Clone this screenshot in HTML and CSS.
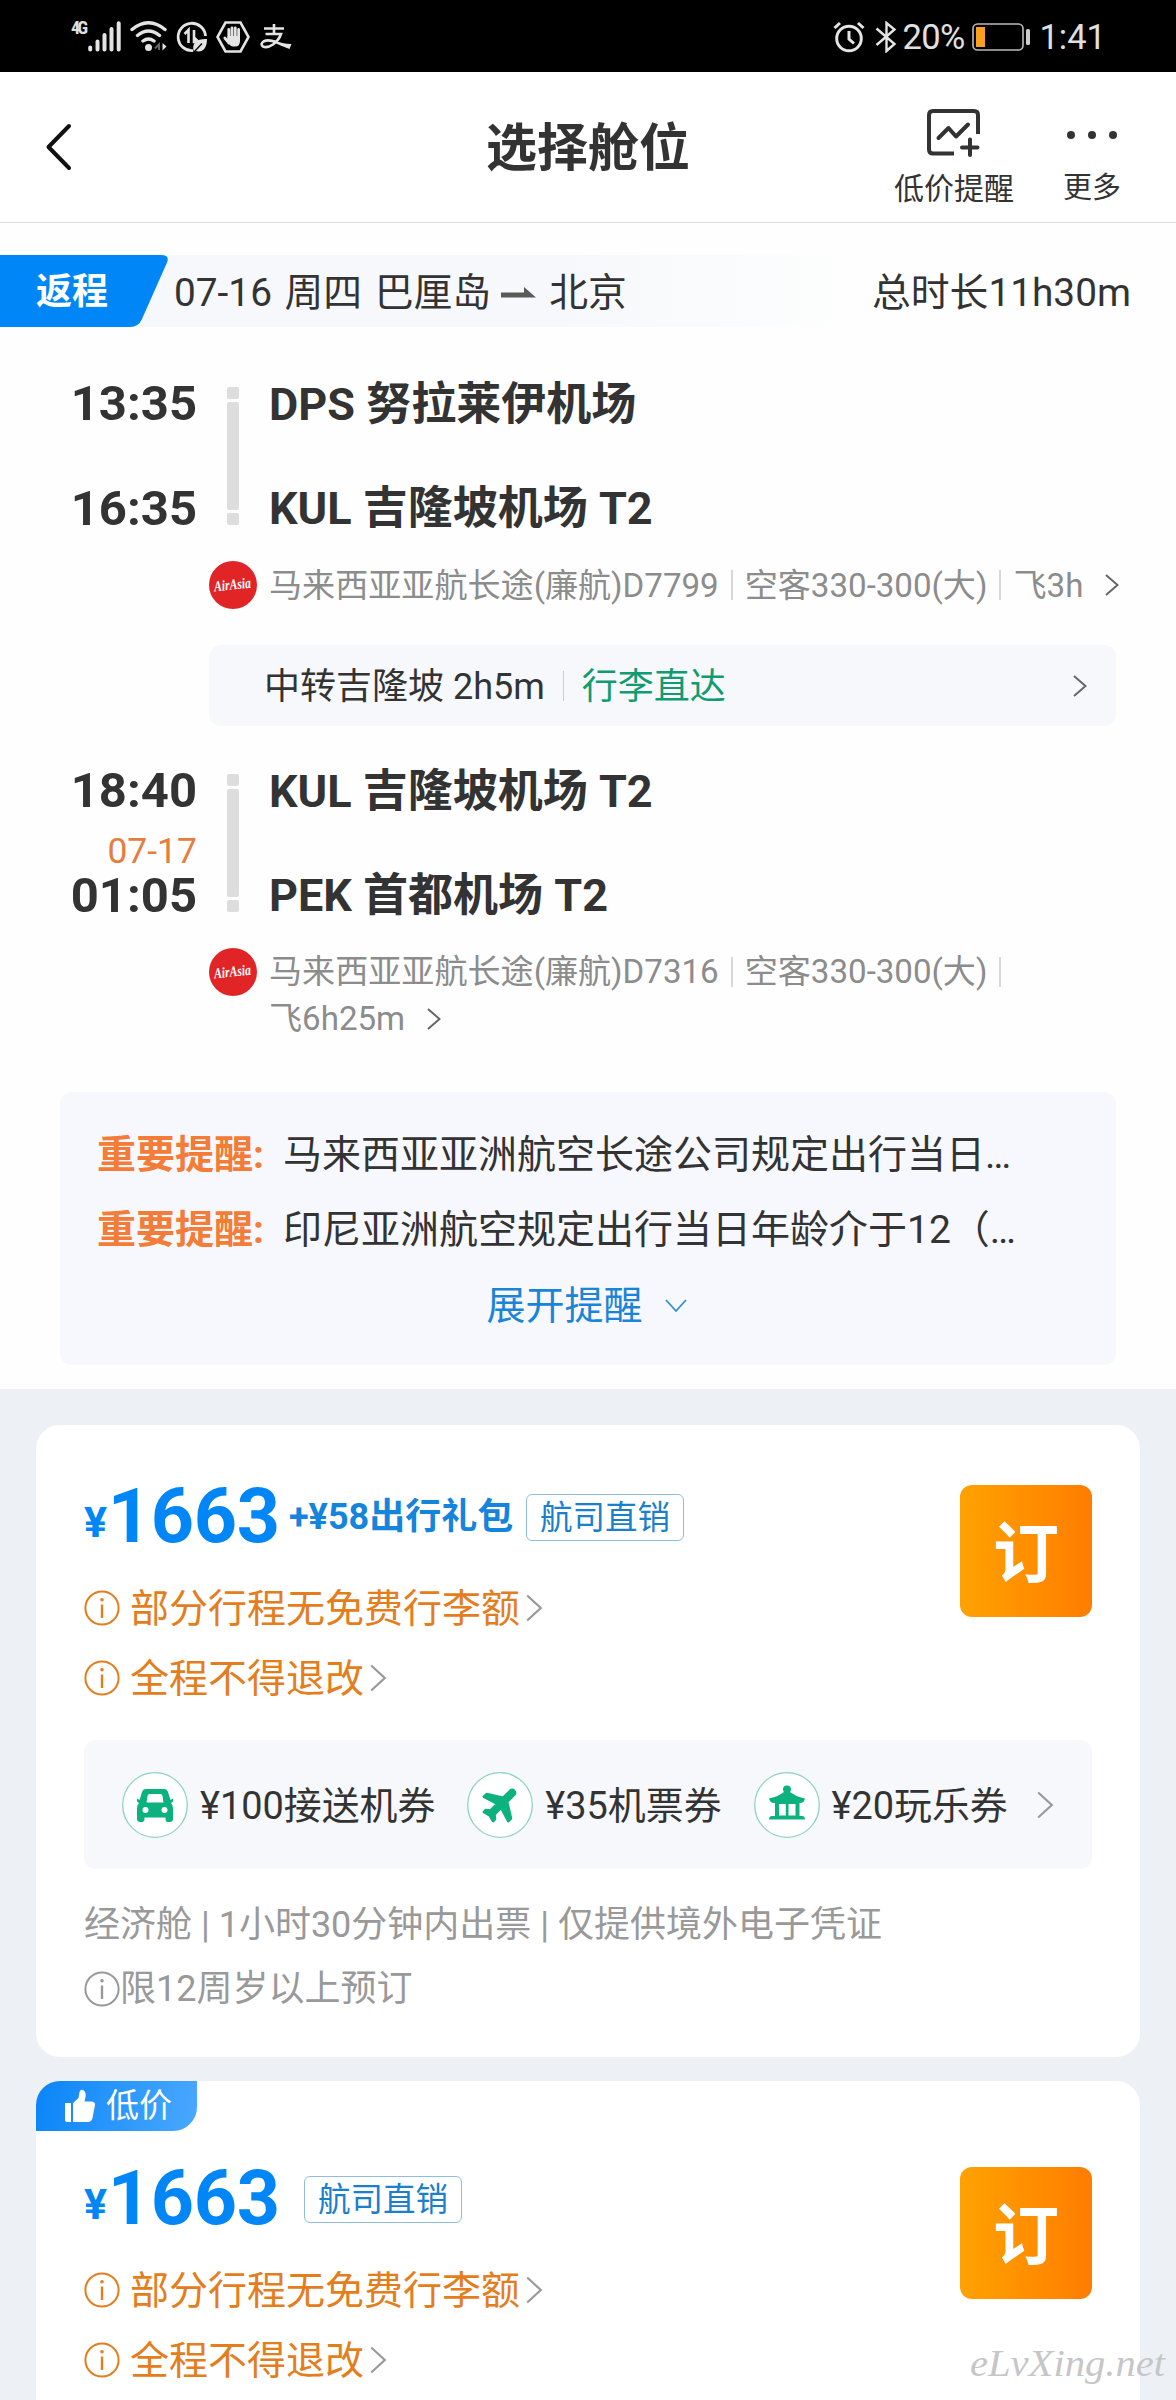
FILE: index.html
```html
<!DOCTYPE html>
<html lang="zh-CN">
<head>
<meta charset="utf-8">
<title>选择舱位</title>
<link rel="stylesheet" href="styles.css">
</head>
<body>
<svg class="defs" width="0" height="0" aria-hidden="true">
  <symbol id="chev" viewBox="0 0 14 22"><path d="M1 1L12.5 11L1 21" fill="none" stroke="currentColor" stroke-width="2"/></symbol>
  <symbol id="chev-lg" viewBox="0 0 17 28"><path d="M1.2 1.5L14.8 14L1.2 26.500" fill="none" stroke="currentColor" stroke-width="2.2"/></symbol>
  <symbol id="info" viewBox="0 0 36 36"><circle cx="18" cy="18" r="16.600" fill="none" stroke="currentColor" stroke-width="2"/><circle cx="18" cy="9.800" r="1.800" fill="currentColor"/><path d="M18 14.500V28" stroke="currentColor" stroke-width="2.400"/></symbol>
</svg>

<div class="status">
  <div class="status-left">
    <span class="net">4G</span>
    <svg class="signal" width="33" height="31" viewBox="0 0 33 31"><g stroke="#e4e4e4" stroke-width="4" stroke-linecap="round"><path d="M2.200 26.500V28.500M9.500 20.500V28.500M16.500 14V28.500M23.500 8V28.500M30.700 2.200V28.500"/></g></svg>
    <svg class="wifi" width="38" height="31" viewBox="0 0 38 31"><g fill="none" stroke="#e4e4e4" stroke-width="3.400" stroke-linecap="round"><path d="M2 8.500Q18.500 -5 35 8.500M7.500 14.500Q18.500 5.500 29.500 14.500M13 20Q18.500 16 24 20"/></g><circle cx="18.500" cy="26.500" r="3.500" fill="#e4e4e4"/><path d="M29 29V23.500L25 27.500" stroke="#666" fill="none" stroke-width="2"/><path d="M32.500 22V29.500L36.500 25.500Z" fill="#e4e4e4"/></svg>
    <svg class="data" width="32" height="32" viewBox="0 0 32 32"><path d="M29.500 15A13.700 13.700 0 1 0 17 29.600" fill="none" stroke="#e4e4e4" stroke-width="2.800"/><path d="M8.500 13L12.500 9V22M18 9V21H22.500L18.500 17" fill="none" stroke="#e4e4e4" stroke-width="2.600"/><path d="M18 31C15 22 21 17.500 31 18C31 27 27 32 20 30Z" fill="#e4e4e4"/><path d="M18 31L26 22.500" stroke="#000" stroke-width="1.300"/></svg>
    <svg class="hex" width="34" height="32" viewBox="0 0 34 32"><path d="M9.500 1.500H24.500L32.500 16L24.500 30.500H9.500L1.500 16Z" fill="none" stroke="#e4e4e4" stroke-width="2.600"/><g stroke="#e4e4e4" stroke-width="2.800" stroke-linecap="round"><path d="M12.800 8.500V18M16 6.800V18M19.300 6.800V18M22.600 8.500V18M8.800 17L13 22"/></g><path d="M11.500 15H24V20Q24 25.500 19 25.500H17.500Q13.500 25.500 11.500 20Z" fill="#e4e4e4"/></svg>
    <svg class="pay" width="32" height="26" viewBox="0 0 32 26"><g fill="none" stroke="#e4e4e4" stroke-width="2.600"><path d="M4 4.500H24M14 0V10M5.500 10H21Q19 16 13 20.500Q7 24.500 3 22.500Q0 20 3.500 17.500Q8 15 16 18"/></g><path d="M14 16Q22 20 31.500 20L29.500 25Q21 22 14 18.500Z" fill="#e4e4e4"/></svg>
  </div>
  <div class="status-right">
    <svg class="alarm" width="32" height="32" viewBox="0 0 32 32"><g fill="none" stroke="#e4e4e4" stroke-width="3"><circle cx="16" cy="17.500" r="12.300"/><path d="M1.500 7L7 2M30.500 7L25 2M16 10V18L21 22.500"/></g></svg>
    <svg class="bt" width="22" height="32" viewBox="0 0 22 32"><path d="M1.500 7.500L19.500 23L11.500 30V2L19.500 8.500L1.500 24" fill="none" stroke="#e4e4e4" stroke-width="2.400"/></svg>
    <span class="pct">20%</span>
    <svg class="batt" width="59" height="28" viewBox="0 0 59 28"><rect x="1" y="1" width="50" height="26" rx="4.500" fill="none" stroke="#bbb" stroke-width="1.600"/><rect x="4" y="4" width="9" height="20" fill="#f9a01f"/><rect x="54" y="6" width="4" height="16" rx="1.500" fill="#ccc"/></svg>
    <span class="clock">1:41</span>
  </div>
</div>

<header class="header">
  <svg class="back" width="28" height="48" viewBox="0 0 28 48"><path d="M25 3L4.500 24L25 45" fill="none" stroke="#111" stroke-width="4" stroke-linecap="round" stroke-linejoin="round"/></svg>
  <h1>选择舱位</h1>
  <div class="action alert">
    <svg width="54" height="48" viewBox="0 0 54 48"><g fill="none" stroke="#333" stroke-width="4"><path d="M27 44.500H6Q2 44.500 2 40.500V6Q2 2 6 2H47Q51 2 51 6V25" /><path d="M11.500 29L21.500 19L29 27.500L41 15.500" stroke-linecap="round" stroke-linejoin="round"/><path d="M43 30.500V46M35 38.500H50.500" stroke-linecap="round"/></g></svg>
    <span>低价提醒</span>
  </div>
  <div class="action more">
    <svg width="52" height="10" viewBox="0 0 52 10"><g fill="#333"><circle cx="5" cy="5" r="4"/><circle cx="26" cy="5" r="4"/><circle cx="47" cy="5" r="4"/></g></svg>
    <span>更多</span>
  </div>
</header>

<main>
  <section class="trip">
    <div class="trip-bar">
      <div class="dir">
        <svg class="dir-bg" width="168" height="72" viewBox="0 0 168 72"><path d="M0 0H161Q170 0 167 7.500L142 64Q138.500 72 130 72H0Z" fill="#0086f6"/></svg>
        <span>返程</span>
      </div>
      <span class="date">07-16 周四 巴厘岛</span>
      <svg class="arrow" width="35" height="12" viewBox="0 0 35 12"><path d="M0 5.500H23V0L35 10.500H0Z" fill="#5a5a5a"/></svg>
      <span>北京</span>
      <span class="total">总时长11h30m</span>
    </div>

    <div class="route">
      <div class="times"><b>13:35</b><b>16:35</b></div>
      <div class="rail"><i></i><i class="long"></i><i></i></div>
      <div class="ports"><b>DPS 努拉莱伊机场</b><b>KUL 吉隆坡机场 T2</b></div>
    </div>
    <div class="flight">
      <svg class="logo" width="48" height="48" viewBox="0 0 48 48"><circle cx="24" cy="24" r="24" fill="#e12426"/><text x="5" y="28.500" textLength="37" lengthAdjust="spacingAndGlyphs" transform="rotate(-6 24 24)">AirAsia</text></svg>
      <div class="meta"><span>马来西亚亚航长途(廉航)D7799</span><i></i><span>空客330-300(大)</span><i></i><span>飞3h<svg class="chev" width="14" height="22"><use href="#chev"/></svg></span></div>
    </div>

    <div class="transfer"><span>中转吉隆坡 2h5m</span><i></i><span class="green">行李直达</span><svg class="chev" width="14" height="22"><use href="#chev"/></svg></div>

    <div class="route">
      <div class="times"><b>18:40</b><span>07-17</span><b>01:05</b></div>
      <div class="rail"><i></i><i class="long"></i><i></i></div>
      <div class="ports"><b>KUL 吉隆坡机场 T2</b><b>PEK 首都机场 T2</b></div>
    </div>
    <div class="flight">
      <svg class="logo" width="48" height="48" viewBox="0 0 48 48"><circle cx="24" cy="24" r="24" fill="#e12426"/><text x="5" y="28.500" textLength="37" lengthAdjust="spacingAndGlyphs" transform="rotate(-6 24 24)">AirAsia</text></svg>
      <div class="meta"><span>马来西亚亚航长途(廉航)D7316</span><i></i><span>空客330-300(大)</span><i></i><span>飞6h25m<svg class="chev" width="14" height="22"><use href="#chev"/></svg></span></div>
    </div>

    <div class="notice">
      <p><b>重要提醒:</b><span>马来西亚亚洲航空长途公司规定出行当日…</span></p>
      <p><b>重要提醒:</b><span>印尼亚洲航空规定出行当日年龄介于12（…</span></p>
      <p class="expand">展开提醒<svg width="22" height="14" viewBox="0 0 22 14"><path d="M1 1L11 12L21 1" fill="none" stroke="#2b8fdc" stroke-width="1.800"/></svg></p>
    </div>
  </section>

  <section class="offers">
    <article class="card">
      <div class="head">
        <div class="info">
          <div class="price-row"><div class="price"><small>¥</small>1663</div><b class="plus">+¥58出行礼包</b><span class="tag">航司直销</span></div>
          <div class="warn"><svg width="36" height="36"><use href="#info"/></svg><span>部分行程无免费行李额</span><svg class="chev-lg" width="17" height="28"><use href="#chev-lg"/></svg></div>
          <div class="warn"><svg width="36" height="36"><use href="#info"/></svg><span>全程不得退改</span><svg class="chev-lg" width="17" height="28"><use href="#chev-lg"/></svg></div>
        </div>
        <button class="book">订</button>
      </div>
      <div class="perks">
        <svg width="66" height="66" viewBox="0 0 66 66"><circle cx="33" cy="33" r="32.300" fill="#fff" stroke="#8fd4bd" stroke-width="1.300"/><path d="M24 17H42Q45 17 46 20L48.500 28L51 26.500V29.500L49 31Q51 33 51 36V47Q51 50 48 50H46Q43.500 50 43.500 47V45.500H22.500V47Q22.500 50 20 50H18Q15 50 15 47V36Q15 33 17 31L15 29.500V26.500L17.500 28L20 20Q21 17 24 17ZM27.500 22Q26 22 25.500 24L24.500 30.500H41.500L40.500 24Q40 22 38.500 22ZM23.500 35A3 3 0 1 0 23.500 41A3 3 0 1 0 23.500 35ZM42.500 35A3 3 0 1 0 42.500 41A3 3 0 1 0 42.500 35Z" fill="#0cb27e" fill-rule="evenodd"/></svg>
        <span>¥100接送机券</span>
        <svg class="next" width="66" height="66" viewBox="0 0 66 66"><circle cx="33" cy="33" r="32.300" fill="#fff" stroke="#8fd4bd" stroke-width="1.300"/><g transform="translate(33 33) rotate(45) scale(1.800) translate(-11.500 -13)"><path d="M21 16v-2l-8-5V3.500c0-.83-.67-1.500-1.500-1.500S10 2.670 10 3.500V9l-8 5v2l8-2.500V19l-2 1.500V22l3.500-1 3.500 1v-1.500L13 19v-5.500l8 2.500z" fill="#0cb27e" stroke="#0cb27e" stroke-width="1.600" stroke-linejoin="round"/></g></svg>
        <span>¥35机票券</span>
        <svg class="next" width="66" height="66" viewBox="0 0 66 66"><circle cx="33" cy="33" r="32.300" fill="#fff" stroke="#8fd4bd" stroke-width="1.300"/><path d="M33 13.500A4 4 0 0 1 37 17.500Q37 19 36 20Q43 25 51 26.500Q50 31 46 31H45.500V44H48Q51 44 51 47.500H15Q15 44 18 44H21V31H20Q16 31 15 26.500Q23 25 30 20Q29 19 29 17.500A4 4 0 0 1 33 13.500ZM25 32V43.500H31.800V32ZM34.500 32V43.500H41.500V32Z" fill="#0cb27e" fill-rule="evenodd"/></svg>
        <span>¥20玩乐券</span>
        <svg class="chev-lg" width="17" height="30"><use href="#chev-lg"/></svg>
      </div>
      <p class="terms">经济舱 | 1小时30分钟内出票 | 仅提供境外电子凭证</p>
      <p class="terms"><svg width="36" height="36"><use href="#info"/></svg>限12周岁以上预订</p>
    </article>

    <article class="card second">
      <div class="badge"><svg width="32" height="34" viewBox="0 0 32 34"><path d="M1 14H7V33H3Q1 33 1 31ZM9 14L14.500 9L15.500 3Q16.500 0 19 1Q22.500 3 21.500 8L20.500 12.500H28Q31.500 13 31 16L28.500 29Q27.500 33 24 33H9Z" fill="#fff"/></svg><span>低价</span></div>
      <div class="head">
        <div class="info">
          <div class="price-row"><div class="price"><small>¥</small>1663</div><span class="tag solo">航司直销</span></div>
          <div class="warn"><svg width="36" height="36"><use href="#info"/></svg><span>部分行程无免费行李额</span><svg class="chev-lg" width="17" height="28"><use href="#chev-lg"/></svg></div>
          <div class="warn"><svg width="36" height="36"><use href="#info"/></svg><span>全程不得退改</span><svg class="chev-lg" width="17" height="28"><use href="#chev-lg"/></svg></div>
        </div>
        <button class="book">订</button>
      </div>
    </article>
  </section>
</main>
<svg class="mark" width="206" height="56" viewBox="0 0 206 56"><text x="2" y="38" textLength="195" lengthAdjust="spacingAndGlyphs">eLvXing.net</text></svg>
</body>
</html>
```
FILE: styles.css
```css
* { box-sizing: border-box; margin: 0; padding: 0; }
body {
  position: relative;
  width: 1176px;
  height: 2400px;
  overflow: hidden;
  background: #fefefe;
  color: #333;
  font-family: Roboto, "Noto Sans CJK SC", sans-serif;
  white-space: nowrap;
}
svg { display: block; flex: none; }
.defs { position: absolute; }

.status { display: flex; justify-content: space-between; height: 72px; padding: 21px 72px 0 71px; background: #000; color: #e0e0e0; }
.status-left, .status-right { display: flex; align-items: flex-start; }
.net { width: 17px; font: bold 18px/14px "Roboto Condensed", Roboto, sans-serif; letter-spacing: -2.500px; }
.wifi { margin-left: 9px; }
.data { margin-left: 8px; }
.hex { margin-left: 8px; }
.pay { margin: 3px 0 0 10px; }
.bt { margin-left: 10px; }
.pct, .clock { font-size: 34.500px; line-height: 32px; }
.pct { width: 67px; margin-left: 5px; letter-spacing: -.6px; }
.batt { margin: 2px 8px 0 3px; }
.clock { margin-right: -2px; }

.header { display: flex; height: 151px; padding-left: 44px; border-bottom: 1px solid #dcdcdc; background: #fff; }
.back { margin-top: 51px; }
.header h1 { margin-left: 414px; font-size: 51px; line-height: 153px; }
.action { display: flex; flex-direction: column; align-items: center; }
.alert { margin: 37px 0 0 204px; font-size: 30px; line-height: 36px; }
.alert span { margin-top: 14px; }
.more { margin: 58px 0 0 49px; font-size: 29px; line-height: 36px; }
.more span { margin-top: 30px; }

.trip { padding: 32px 0 24px; background: #fefefe; }
.trip-bar {
  display: flex;
  height: 72px;
  padding-right: 45px;
  background: linear-gradient(90deg, #f6f8fb 0, #f6f8fb 560px, #fefefe 870px);
  font-size: 38.800px;
  line-height: 75px;
}
.dir { position: relative; width: 168px; color: #fff; font-size: 36px; font-weight: bold; }
.dir-bg { position: absolute; left: 0; top: 0; }
.dir span { position: relative; margin-left: 36px; }
.date { margin-left: 6px; word-spacing: 3px; }
.arrow { margin: 32px 13px 0 10px; }
.total { margin-left: auto; }

.route { display: flex; height: 138px; margin-top: 60px; }
.times { display: flex; flex-direction: column; justify-content: space-between; align-items: flex-end; width: 197px; padding-top: 1px; font-size: 49px; line-height: 32px; }
.times span { padding-top: 14px; color: #e67d3c; font-size: 35.500px; line-height: 30px; }
.rail { display: flex; flex-direction: column; gap: 3px; width: 12px; margin: 0 30px; }
.rail i { height: 12px; border-radius: 2px; background: #ddd; }
.rail .long { flex: 1; }
.ports { display: flex; flex-direction: column; justify-content: space-between; padding-top: 1px; font-size: 45px; line-height: 33px; }

.flight { display: flex; margin: 36px 0 0 209px; }
.logo text { fill: #fff; font: italic bold 15px "Liberation Serif", serif; }
.meta { display: flex; flex-wrap: wrap; width: 870px; margin-left: 12px; color: #8c8c8c; font-size: 33.100px; line-height: 47px; }
.meta span { display: flex; align-items: center; }
.meta i { width: 2px; height: 30px; margin: 9px 12px 0 12px; background: #d8d8d8; }
.chev { color: #666; }
.meta .chev { margin-left: 22px; }

.transfer { display: flex; align-items: center; height: 81px; margin: 36px 60px 0 209px; padding: 0 29px 0 55px; border-radius: 12px; background: #f6f8fb; font-size: 36px; line-height: 79px; }
.transfer span { padding-top: 4px; }
.transfer i { width: 1px; height: 30px; margin: 0 18px; background: #ccc; }
.transfer .green { color: #109c70; }
.transfer .chev { margin-left: auto; }
.transfer + .route { margin-top: 48px; }

.notice { height: 273px; margin: 50px 60px 0; padding: 25px 37px 0; border-radius: 12px; background: #f7f8fd; font-size: 39px; line-height: 77px; }
.notice p { display: flex; height: 75px; }
.notice b { width: 186px; color: #f27c38; }
.notice .expand { justify-content: center; align-items: center; gap: 22px; padding: 3px 3px 0 0; color: #1a84d6; }

.offers { display: flex; flex-direction: column; gap: 24px; height: 1011px; padding: 36px 36px 0; overflow: hidden; background: #edf1f6; }
.card { flex: none; height: 632px; padding: 60px 48px 0; border-radius: 24px; background: #fff; }
.head { display: flex; justify-content: space-between; }
.price-row { display: flex; height: 64px; margin-bottom: 24px; line-height: 64px; }
.price { width: 205px; color: #0086f6; font-size: 75.500px; font-weight: bold; letter-spacing: -.3px; line-height: 62px; }
.price small { margin-right: 1px; font-size: 43px; line-height: 1; vertical-align: 5px; }
.plus { width: 237px; color: #1484dc; font-size: 36px; }
.tag { height: 47px; margin-top: 9px; padding: 0 13px; border: 1.500px solid #8fbce0; border-radius: 6px; color: #1a80cc; font-size: 32.500px; line-height: 47px; }
.tag.solo { margin-left: 15px; }
.warn { display: flex; align-items: center; height: 70px; color: #e47d1c; font-size: 39px; line-height: 68px; }
.warn span { margin: 0 6px 0 10px; padding-top: 2px; }
.chev-lg { color: #999; }
.book { width: 132px; height: 132px; padding-bottom: 5px; border: 0; border-radius: 12px; background: linear-gradient(90deg, #ffa200, #ff7d00); color: #fff; font: bold 66px/1.500 "Noto Sans CJK SC", sans-serif; }
.perks { display: flex; align-items: center; height: 129px; margin-top: 27px; padding: 0 38px; border-radius: 12px; background: #f6f8fc; font-size: 37.900px; line-height: 125px; }
.perks span { margin-left: 12px; padding-top: 4px; }
.perks .next { margin-left: 32px; }
.perks .chev-lg { margin-left: auto; }
.terms { display: flex; align-items: center; height: 64px; color: #999; font-size: 36px; line-height: 64px; }
.perks + .terms { margin-top: 24px; }

.second { height: 319px; padding-top: 0; border-radius: 24px 24px 0 0; }
.badge { display: flex; align-items: center; width: 161px; height: 50px; margin: 0 0 36px -48px; padding-left: 28px; border-radius: 24px 0; background: linear-gradient(100deg, #0a85f8, #4aa8fe); color: #fff; font-size: 33px; line-height: 50px; }
.badge span { margin-left: 10px; }

.mark { position: absolute; left: 968px; top: 2338px; }
.mark text { fill: #c6c6c8; font: italic 38px "Liberation Serif", serif; }
```
